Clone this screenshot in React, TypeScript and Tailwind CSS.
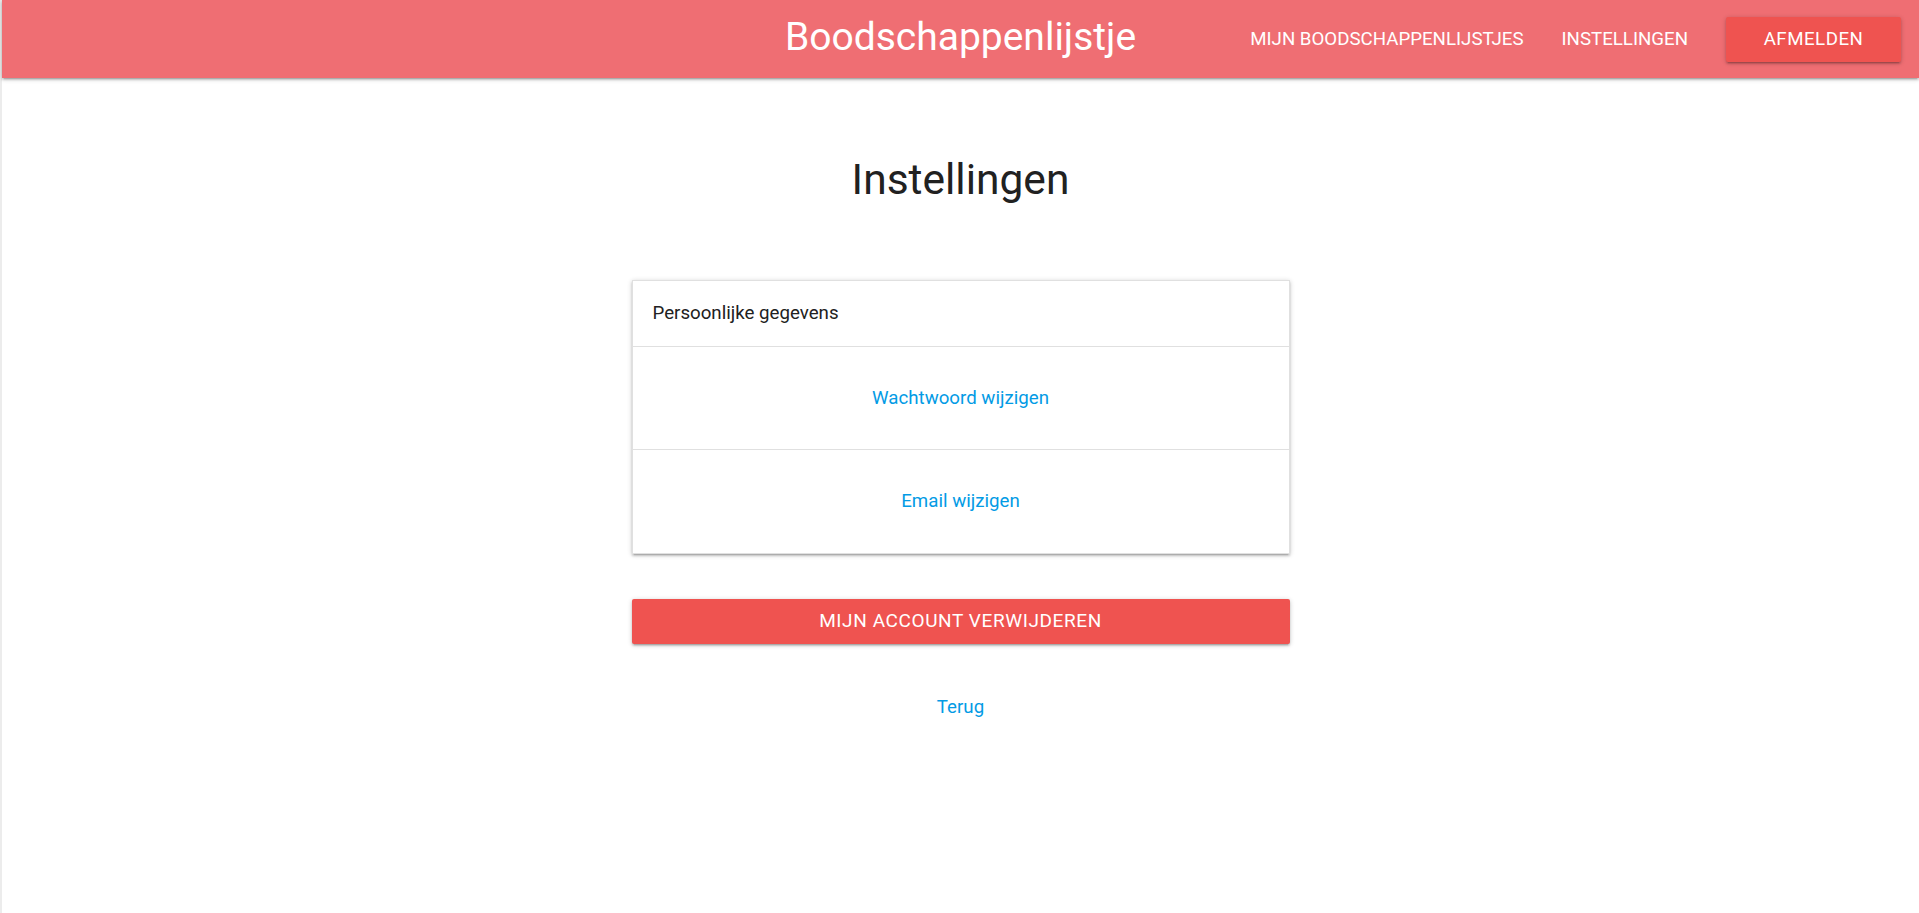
const navLinks = ["Mijn boodschappenlijstjes", "Instellingen"];

const settingsLinks = ["Wachtwoord wijzigen", "Email wijzigen"];

const Header = () => {
  return (
    <header className="h-[78px] bg-[#ef6e73] grid grid-cols-[1fr_auto_1fr] items-center shadow-[0_2px_2px_0_rgba(0,0,0,0.14),0_3px_1px_-2px_rgba(0,0,0,0.12),0_1px_5px_0_rgba(0,0,0,0.2)] relative z-10">
      <div />
      <a className="text-white text-[39px] leading-none pb-1 cursor-pointer">
        Boodschappenlijstje
      </a>
      <nav className="flex items-center justify-end gap-[38px] pr-[18px]">
        {navLinks.map((link) => (
          <a key={link} className="text-white text-[18.7px] uppercase cursor-pointer">
            {link}
          </a>
        ))}
        <button className="h-[45px] w-[175px] bg-[#ef5350] text-white text-[18.7px] tracking-[0.5px] uppercase rounded-[2px] shadow-[0_2px_2px_0_rgba(0,0,0,0.14),0_3px_1px_-2px_rgba(0,0,0,0.12),0_1px_5px_0_rgba(0,0,0,0.2)]">
          Afmelden
        </button>
      </nav>
    </header>
  );
};

const SettingsCard = () => {
  return (
    <div className="w-[658px] border border-[#e0e0e0] bg-white shadow-[0_2px_2px_0_rgba(0,0,0,0.14),0_3px_1px_-2px_rgba(0,0,0,0.12),0_1px_5px_0_rgba(0,0,0,0.2)]">
      <div className="h-[66px] flex items-center px-5 text-[18.7px] text-[#212121] border-b border-[#e0e0e0]">
        Persoonlijke gegevens
      </div>
      {settingsLinks.map((link, i) => (
        <div
          key={link}
          className={`h-[103px] flex items-center justify-center ${i < settingsLinks.length - 1 ? "border-b border-[#e0e0e0]" : ""}`}
        >
          <a className="text-[#039be5] text-[18.7px] cursor-pointer">{link}</a>
        </div>
      ))}
    </div>
  );
};

const App = () => {
  return (
    <div className="min-h-screen bg-white font-['Roboto',sans-serif] border-l-2 border-[#ececec]">
      <Header />
      <main className="flex flex-col items-center pt-[80px]">
        <h4 className="text-[42.5px] leading-[44px] text-[#212121]">Instellingen</h4>

        <div className="mt-[78px]">
          <SettingsCard />
        </div>

        <button className="mt-[45px] w-[658px] h-[45px] bg-[#ef5350] text-white text-[19px] tracking-[0.6px] uppercase rounded-[2px] shadow-[0_2px_2px_0_rgba(0,0,0,0.14),0_3px_1px_-2px_rgba(0,0,0,0.12),0_1px_5px_0_rgba(0,0,0,0.2)]">
          Mijn account verwijderen
        </button>

        <a className="mt-[51px] text-[#039be5] text-[18.7px] leading-6 cursor-pointer">
          Terug
        </a>
      </main>
    </div>
  );
};

export default App;
